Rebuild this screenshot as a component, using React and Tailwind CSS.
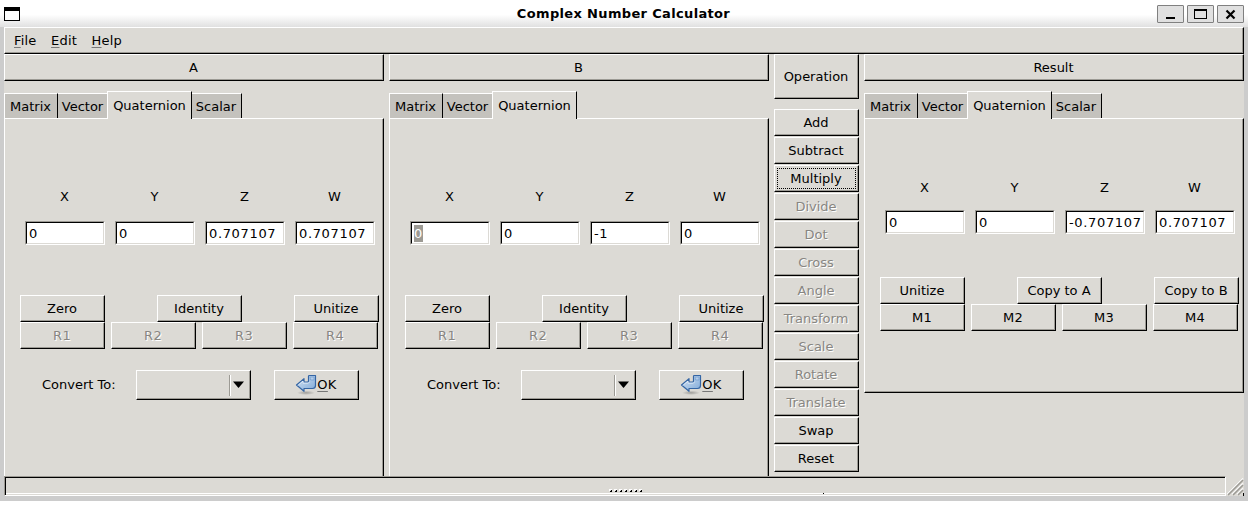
const raised =
  'border border-t-white border-l-white border-r-black border-b-black shadow-[inset_-1px_-1px_0_#9c9a94]'
const face = 'bg-[#dcdad5]'

function Button({ children, className = '', disabled, focused }) {
  return (
    <button
      className={`flex shrink-0 items-center justify-center whitespace-nowrap ${raised} ${face} ${
        disabled ? 'text-[#888682] [text-shadow:1px_1px_0_#fff]' : 'text-black'
      } ${focused ? 'p-[2px]' : 'pr-px'} ${className}`}
    >
      {focused ? (
        <span className="flex h-full w-full items-center justify-center border border-dotted border-black pr-px">{children}</span>
      ) : (
        children
      )}
    </button>
  )
}

function Tabs({ scalar }) {
  const idle = 'h-[25px] bg-[#c4c2bd] border-t border-t-white border-r border-r-black pt-px flex items-center justify-center'
  return (
    <div className="flex h-[27px] items-end">
      <div className={`w-[54px] border-l border-l-white pr-px ${idle}`}>Matrix</div>
      <div className={`w-[50px] border-r-0! pr-px ${idle}`}>Vector</div>
      <div className={`relative -mb-px -ml-px flex h-[28px] w-[85px] items-center justify-center border-t border-r border-l border-t-white border-r-black border-l-white pt-px ${face}`}>
        Quaternion
      </div>
      {scalar && <div className={`w-[50px] pr-px ${idle}`}>Scalar</div>}
    </div>
  )
}

function Field({ value, selected }) {
  return (
    <div className="h-[24px] w-[80px] border border-t-[#9c9a94] border-r-white border-b-white border-l-[#9c9a94]">
      <div className="flex h-full items-center border border-t-black border-r-[#dcdad5] border-b-[#dcdad5] border-l-black bg-white pt-px pl-[2px] tracking-[0.65px] whitespace-nowrap">
        {selected ? (
          <span className="mb-px h-[17px] w-[9px] bg-[#9c9a94] leading-[18px] tracking-normal text-white">{value}</span>
        ) : (
          value
        )}
      </div>
    </div>
  )
}

function Fields({ values, selected, gap }) {
  return (
    <div className={`flex flex-col pl-[20px] ${gap}`}>
      <div className="flex h-[16px] gap-[10px]">
        {['X', 'Y', 'Z', 'W'].map((l) => (
          <div key={l} className="w-[80px] pr-px text-center leading-[16px]">{l}</div>
        ))}
      </div>
      <div className="flex gap-[10px]">
        {values.map((v, i) => (
          <Field key={i} value={v} selected={selected && i === 0} />
        ))}
      </div>
    </div>
  )
}

function ButtonGrid({ top, bottom, disabled }) {
  return (
    <div className="pl-[15px]">
      <div className="flex">
        <Button className="h-[27px] w-[85px]">{top[0]}</Button>
        <Button className="ml-[52px] h-[27px] w-[85px]">{top[1]}</Button>
        <Button className="ml-[52px] h-[27px] w-[85px]">{top[2]}</Button>
      </div>
      <div className="flex gap-[6px]">
        {bottom.map((t) => (
          <Button key={t} disabled={disabled} className="h-[27px] w-[85px] tracking-[0.3px]">{t}</Button>
        ))}
      </div>
    </div>
  )
}

function OkIcon() {
  return (
    <svg width="22" height="22" viewBox="0 0 22 22" className="shrink-0">
      <defs>
        <linearGradient id="arrow" x1="0" y1="0" x2="1" y2="1">
          <stop offset="0" stopColor="#d5e4f4" />
          <stop offset="1" stopColor="#7fa9d8" />
        </linearGradient>
        <radialGradient id="shade">
          <stop offset="0" stopColor="#000" stopOpacity=".28" />
          <stop offset="1" stopColor="#000" stopOpacity="0" />
        </radialGradient>
      </defs>
      <ellipse cx="11" cy="18.8" rx="9" ry="2.2" fill="url(#shade)" />
      <path
        d="M1.5 11 L9 4.700 V8 H12.500 Q13.500 8 13.500 7 V2.500 Q13.500 1.500 14.500 1.500 H20.500 V11.500 Q20.500 14.500 17.500 14.500 H9 V17.300 Z"
        fill="url(#arrow)"
        stroke="#3465a4"
        strokeWidth="1.2"
        strokeLinejoin="round"
      />
      <path d="M15 3 H19 V6 H15.500 Z" fill="#b4cdea" stroke="#6f9acb" strokeWidth=".7" />
      <path d="M3.3 11 L8 7 V9.200 H13 L14.800 8" fill="none" stroke="#fff" strokeOpacity=".7" strokeWidth=".8" />
    </svg>
  )
}

function Header({ children }) {
  return <div className={`flex h-[27px] w-[380px] items-center justify-center pr-px ${raised} ${face}`}>{children}</div>
}

function Operand({ name, values, scalar, selected }) {
  return (
    <section className="flex h-[422px] w-[380px] shrink-0 flex-col">
      <Header>{name}</Header>
      <div className="h-[10px]" />
      <Tabs scalar={scalar} />
      <div className="flex h-[358px] flex-col border-t border-r border-l border-t-white border-r-black border-l-white pt-[70px] shadow-[inset_-1px_0_0_#9c9a94]">
        <Fields values={values} selected={selected} gap="gap-[16px]" />
        <div className="h-[50px]" />
        <ButtonGrid top={['Zero', 'Identity', 'Unitize']} bottom={['R1', 'R2', 'R3', 'R4']} disabled />
        <div className="mt-[21px] flex h-[30px] items-center">
          <span className="ml-[37px] w-[94px] pb-px whitespace-nowrap">Convert To:</span>
          <div className={`flex h-[30px] w-[115px] items-center justify-end ${raised}`}>
            <div className="h-[21px] w-[2px] border-r border-l border-r-white border-l-[#9c9a94]" />
            <svg width="19" height="10" viewBox="0 0 19 10">
              <path d="M2 1.500 H13 L7.500 8 Z" fill="#000" />
            </svg>
          </div>
          <Button className="ml-[23px] h-[30px] w-[85px]">
            <OkIcon />
            <span className="tracking-[0.3px]">
              <span className="underline decoration-[#777] decoration-1 underline-offset-2">O</span>K
            </span>
          </Button>
        </div>
      </div>
    </section>
  )
}

const operations = [
  ['Add', true], ['Subtract', true], ['Multiply', true], ['Divide', false], ['Dot', false],
  ['Cross', false], ['Angle', false], ['Transform', false], ['Scale', false], ['Rotate', false],
  ['Translate', false], ['Swap', true], ['Reset', true],
]

function WindowButton({ children }) {
  return (
    <button className="flex h-[18px] w-[27px] items-center justify-center rounded-[1px] border border-[#808080] bg-[#e0e0e0]">
      <svg width="25" height="16" viewBox="0 0 25 16" fill="none" stroke="#000" shapeRendering="crispEdges">{children}</svg>
    </button>
  )
}

export default function App() {
  return (
    <div className="h-[532px] w-[1248px] overflow-hidden bg-white font-['DejaVu_Sans',sans-serif] text-[13px] leading-[16px] text-black">
      <header className="flex h-[27px] items-start bg-linear-to-b from-white from-55% to-[#e0e0e0]">
        <svg width="16" height="14" viewBox="0 0 16 14" className="mt-[7px] ml-[4px]" shapeRendering="crispEdges">
          <path d="M0 0H16V14H0Z" fill="#000" />
          <path d="M1 4H15V13H1Z" fill="#fff" />
        </svg>
        <h1 className="ml-[20px] flex-1 pt-[6px] pl-[50px] text-center text-[13px] font-bold tracking-[0.34px]">Complex Number Calculator</h1>
        <div className="mt-[5px] mr-[4px] flex gap-[3px]">
          <WindowButton><path d="M8 12H17" strokeWidth="2" /></WindowButton>
          <WindowButton>
            <path d="M6.5 3.5H18.5V12.5H6.5Z" />
            <path d="M6 4H19" strokeWidth="2" />
          </WindowButton>
          <WindowButton><path d="M8.5 4.500L16.500 12.500M16.500 4.500L8.500 12.500" strokeWidth="2.2" shapeRendering="auto" /></WindowButton>
        </div>
      </header>
      <div className="h-[474px] bg-[#cccccc] px-[4px]">
        <div className={`h-[469px] ${face}`}>
          <nav className={`flex h-[27px] items-center gap-[14.5px] pl-[9px] tracking-[0.2px] ${raised}`}>
            {['File', 'Edit', 'Help'].map((m) => (
              <span key={m}>
                <span className="underline decoration-[#777] decoration-1 underline-offset-2">{m[0]}</span>
                {m.slice(1)}
              </span>
            ))}
          </nav>
          <main className="flex h-[422px] gap-[5px]">
            <Operand name="A" values={['0', '0', '0.707107', '0.707107']} scalar />
            <Operand name="B" values={['0', '0', '-1', '0']} selected />
            <section className="flex w-[85px] shrink-0 flex-col">
              <Button className="mb-[10px] h-[45px] w-[85px]">Operation</Button>
              <div className="flex flex-col gap-px">
                {operations.map(([label, enabled]) => (
                  <Button key={label} disabled={!enabled} focused={label === 'Multiply'} className="h-[27px] w-[85px]">
                    {label}
                  </Button>
                ))}
              </div>
            </section>
            <section className="flex w-[380px] shrink-0 flex-col">
              <Header>Result</Header>
              <div className="h-[10px]" />
              <Tabs scalar />
              <div className={`h-[275px] pt-[61px] ${raised}`}>
                <Fields values={['0', '0', '-0.707107', '0.707107']} gap="gap-[14px]" />
                <div className="h-[43px]" />
                <ButtonGrid top={['Unitize', 'Copy to A', 'Copy to B']} bottom={['M1', 'M2', 'M3', 'M4']} />
              </div>
            </section>
          </main>
          <footer className="flex h-[20px]">
            <div className="h-[20px] w-[1222px] border border-t-[#9c9a94] border-r-white border-b-white border-l-[#9c9a94]">
              <div className="flex h-full items-end border-t border-l border-black">
                <svg width="1219" height="17" viewBox="0 0 1219 17" shapeRendering="crispEdges">
                  <path d="M0 15.5H1218.500" stroke="#fff" fill="none" />
                  {[0, 5, 10, 15, 20, 25, 30].map((x) => (
                    <g key={x}>
                      <path d={`M${603 + x} 11h3v1h-2v1h-1z`} fill="#fff" />
                      <path d={`M${605 + x} 12h1v2h-2v-1h1z`} fill="#000" />
                    </g>
                  ))}
                  <path d="M817 15h1v1h-1z" fill="#000" />
                </svg>
              </div>
            </div>
            <svg width="18" height="20" viewBox="0 0 18 20" fill="none">
              <path d="M1 18.500L17 2.500M6 18.500L17 7.500M11 18.500L17 12.500" stroke="#fff" strokeWidth="1.200" />
              <path d="M2 19L17 4M7 19L17 9M12 19L17 14" stroke="#9c9a94" strokeWidth="1.600" />
              <path d="M17 17h1v3h-1z" fill="#000" />
            </svg>
          </footer>
        </div>
      </div>
    </div>
  )
}
